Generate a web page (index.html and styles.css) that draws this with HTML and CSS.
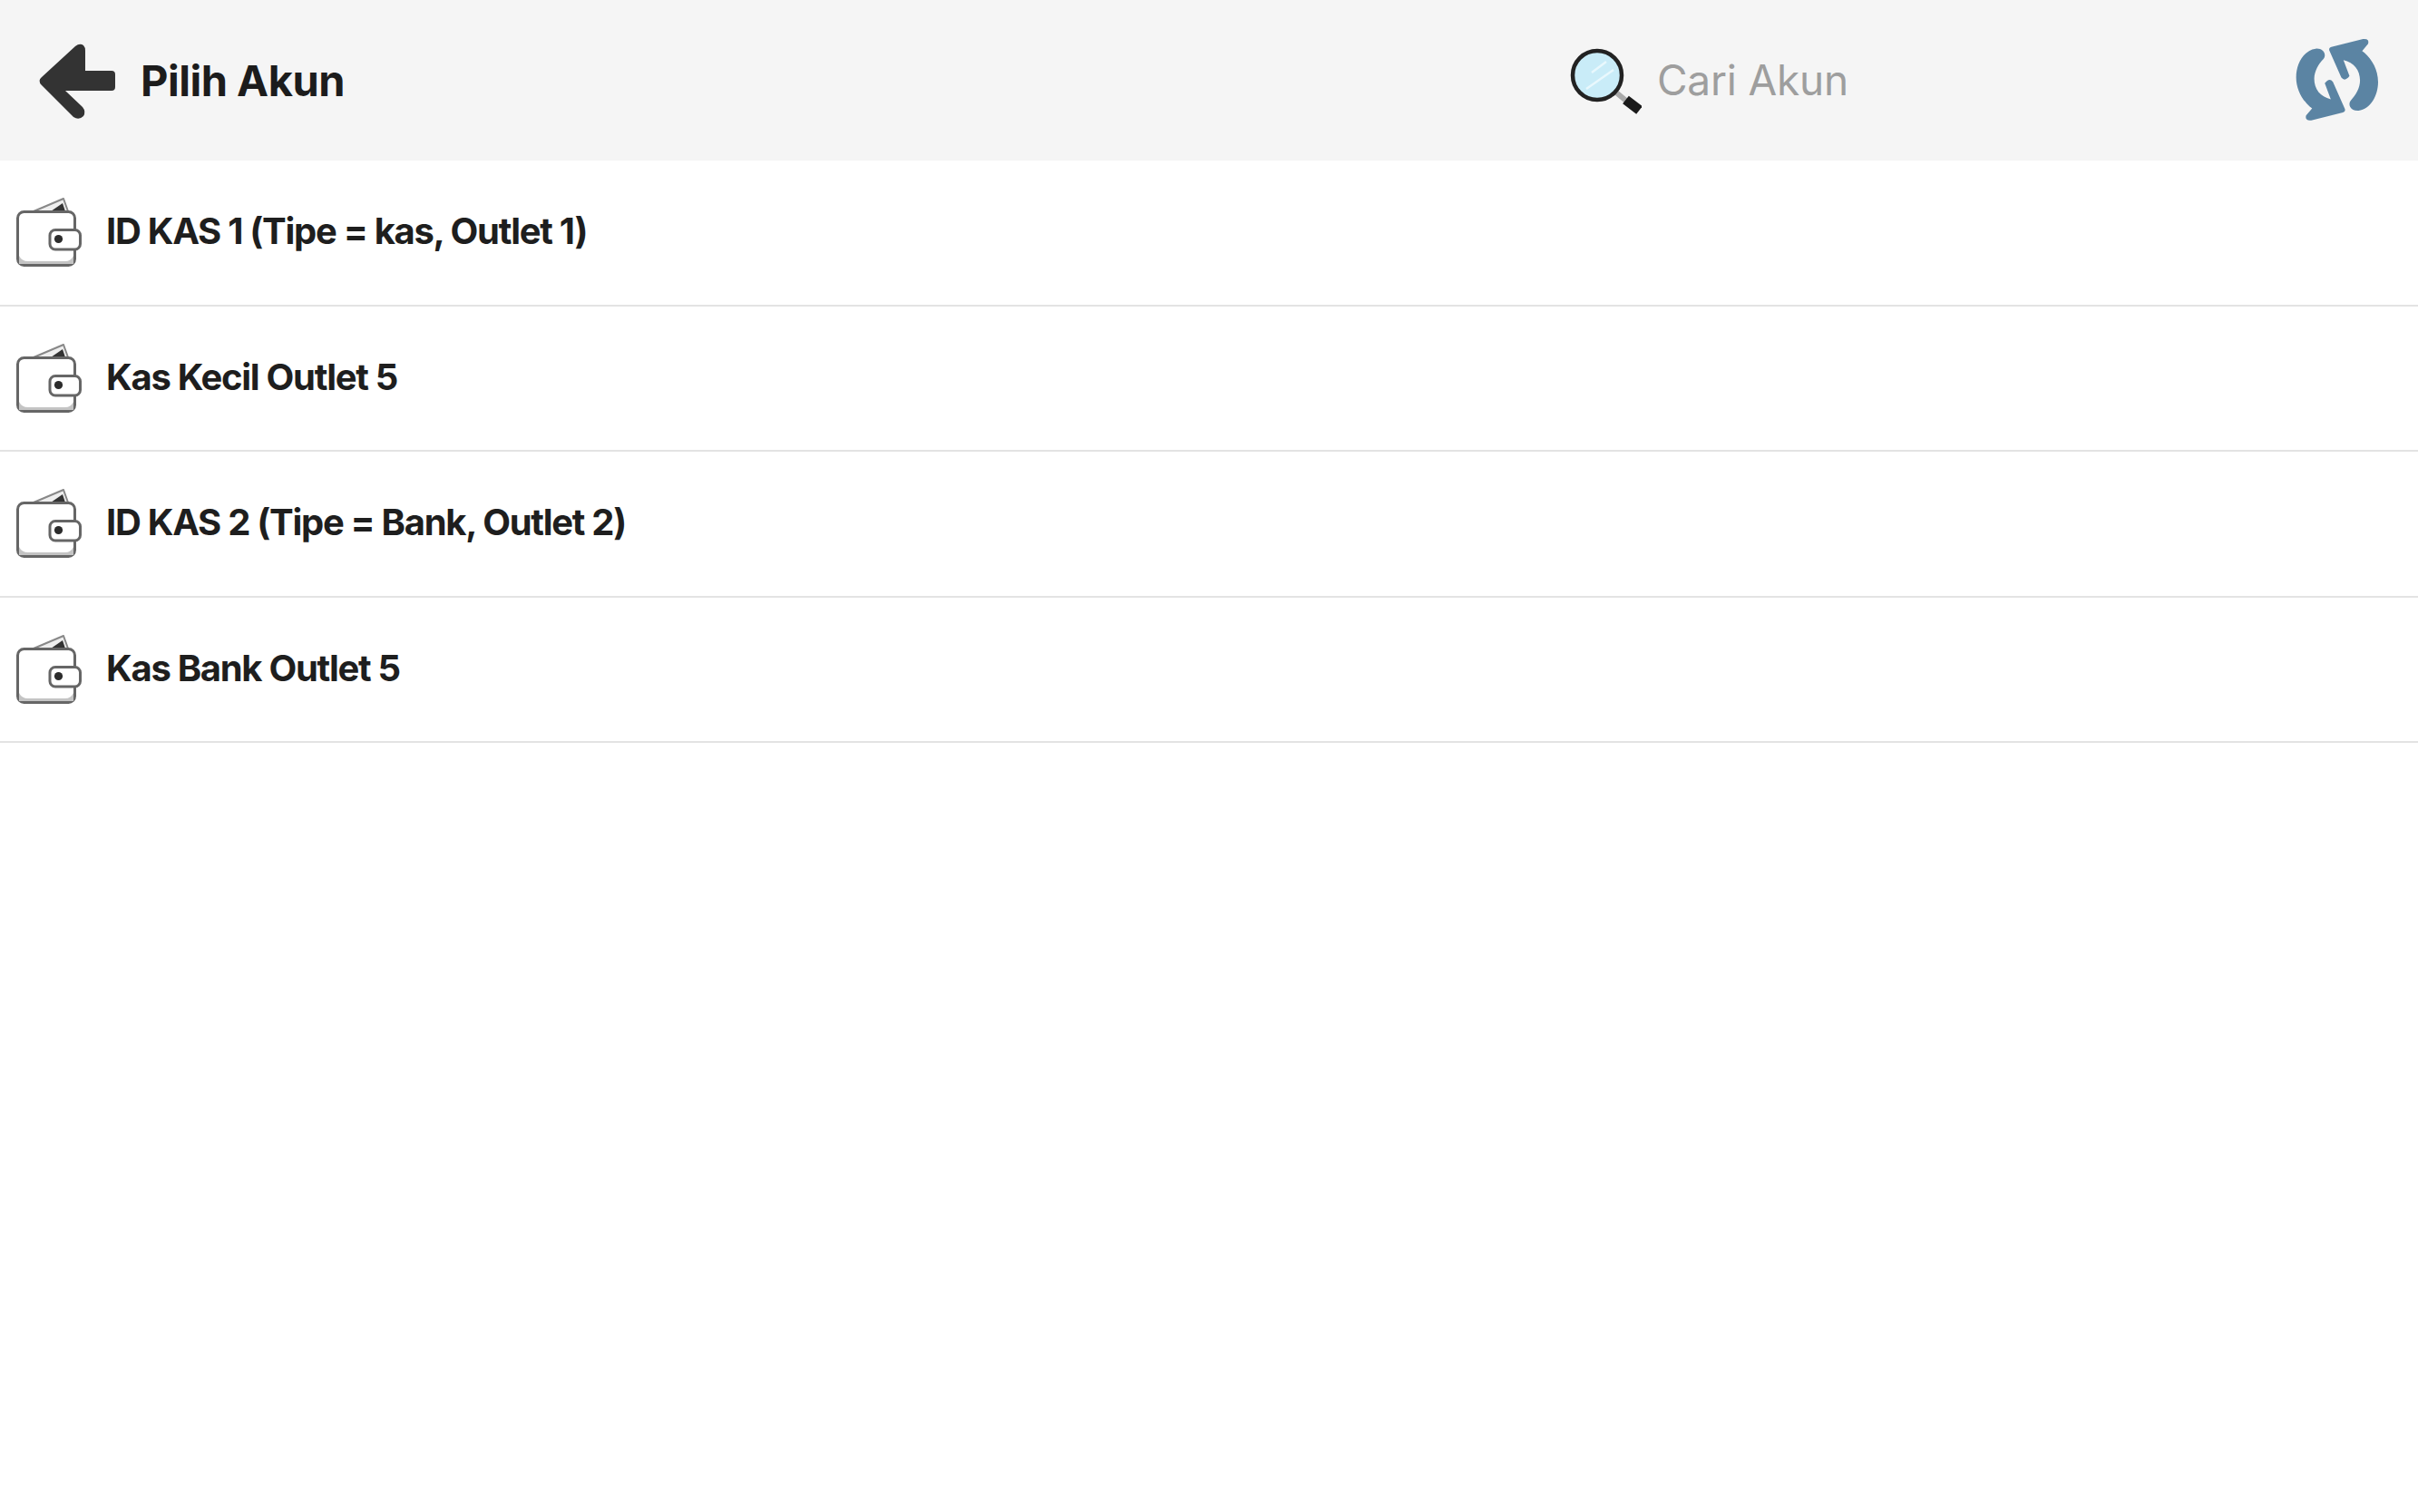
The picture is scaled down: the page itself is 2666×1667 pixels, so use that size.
FILE: index.html
```html
<!DOCTYPE html>
<html lang="id">
<head>
<meta charset="utf-8">
<title>Pilih Akun</title>
<link rel="stylesheet" href="styles.css">
</head>
<body>
<svg class="defs" width="0" height="0" aria-hidden="true">
  <symbol id="wallet" viewBox="18 216 72 80">
    <path d="M37 233 L70 219 L75 233 Z" fill="#eee" stroke="#888" stroke-width="2" stroke-linejoin="round"/>
    <path d="M56 233 L69 224 L72 233 Z" fill="#333"/>
    <rect x="19.5" y="233.5" width="63" height="59" rx="7" fill="#fff" stroke="#666" stroke-width="3"/>
    <path d="M21 282 Q24 288 31 288 H72 Q78 288 81 282 V291 H21 Z" fill="#c4c4c4"/>
    <rect x="55" y="253.5" width="33.5" height="21.5" rx="6" fill="#fff" stroke="#666" stroke-width="3"/>
    <circle cx="64.5" cy="263.5" r="4.6" fill="#2c2c2c"/>
  </symbol>
</svg>
<header class="topbar">
  <svg class="back" viewBox="40 44 90 90" width="90" height="90" aria-hidden="true">
    <path d="M46 85 L83 51 Q88 47 92 50 Q94 52 94 56 V78 H123 Q127 78 127 82 V96 Q127 100 123 100 H72 L91 118 Q95 123 92 128 Q87 133 81 129 L46 94 Q41 89 46 85 Z" fill="#333"/>
  </svg>
  <h1 class="title">Pilih Akun</h1>
  <div class="search">
    <svg class="lens" viewBox="1730 50 80 76" width="80" height="76" aria-hidden="true">
      <path d="M1782 101 L1794 111" stroke="#aaa" stroke-width="6"/>
      <path d="M1792.5 109 L1807.5 120.5" stroke="#1a1a1a" stroke-width="11"/>
      <circle cx="1761" cy="82" r="27" fill="#c9ecf8" stroke="#222" stroke-width="4.5"/>
      <path d="M1755 79 L1771 67 M1749 97 L1779 76" stroke="#e9f8fd" stroke-width="2.4"/>
    </svg>
    <span class="placeholder">Cari Akun</span>
  </div>
  <svg class="refresh" viewBox="90 65 280 280" width="93" height="93" aria-hidden="true">
    <g fill="#5b84a3">
      <path d="M160 100 C120 105 95 150 95 195 C95 235 115 270 140 292 L148 298 L128 322 Q123 340 145 338 L250 312 Q262 308 255 296 L217 210 Q205 195 190 215 L210 268 C175 260 155 235 155 200 C155 175 170 150 185 135 C198 120 185 98 160 100 Z"/>
      <path d="M160 100 C120 105 95 150 95 195 C95 235 115 270 140 292 L148 298 L128 322 Q123 340 145 338 L250 312 Q262 308 255 296 L217 210 Q205 195 190 215 L210 268 C175 260 155 235 155 200 C155 175 170 150 185 135 C198 120 185 98 160 100 Z" transform="rotate(180 231 203)"/>
    </g>
  </svg>
</header>
<main class="list">
  <div class="row"><svg class="wallet" aria-hidden="true"><use href="#wallet"/></svg><span class="name">ID KAS 1 (Tipe = kas, Outlet 1)</span></div>
  <div class="row"><svg class="wallet" aria-hidden="true"><use href="#wallet"/></svg><span class="name">Kas Kecil Outlet 5</span></div>
  <div class="row"><svg class="wallet" aria-hidden="true"><use href="#wallet"/></svg><span class="name">ID KAS 2 (Tipe = Bank, Outlet 2)</span></div>
  <div class="row"><svg class="wallet" aria-hidden="true"><use href="#wallet"/></svg><span class="name">Kas Bank Outlet 5</span></div>
</main>
</body>
</html>
```
FILE: styles.css
```css
html, body {
  margin: 0;
  padding: 0;
  background: #fff;
  font-family: Inter, "Liberation Sans", sans-serif;
}
.defs { position: absolute; }
.topbar {
  height: 177px;
  background: #f5f5f5;
  display: flex;
  align-items: center;
  padding-left: 40px;
  padding-right: 43px;
}
.back { flex: none; }
.title {
  margin: 0 0 0 25px;
  font-size: 47px;
  font-weight: 700;
  letter-spacing: -0.5px;
  color: #1c1c1c;
}
.search {
  margin-left: 1350px;
  display: flex;
  align-items: center;
  flex: 1;
}
.lens { flex: none; }
.placeholder {
  margin: 0 0 2px 17px;
  font-size: 46px;
  color: #9e9e9e;
  letter-spacing: -0.2px;
}
.refresh { flex: none; }
.row {
  height: 158.5px;
  border-bottom: 2px solid #e3e3e3;
  display: flex;
  align-items: center;
  padding-left: 18px;
}
.wallet {
  width: 72px;
  height: 80px;
  flex: none;
}
.name {
  margin: 0 0 3px 27px;
  font-size: 40px;
  font-weight: 700;
  letter-spacing: -1.3px;
  color: #1e1e1e;
}
```
